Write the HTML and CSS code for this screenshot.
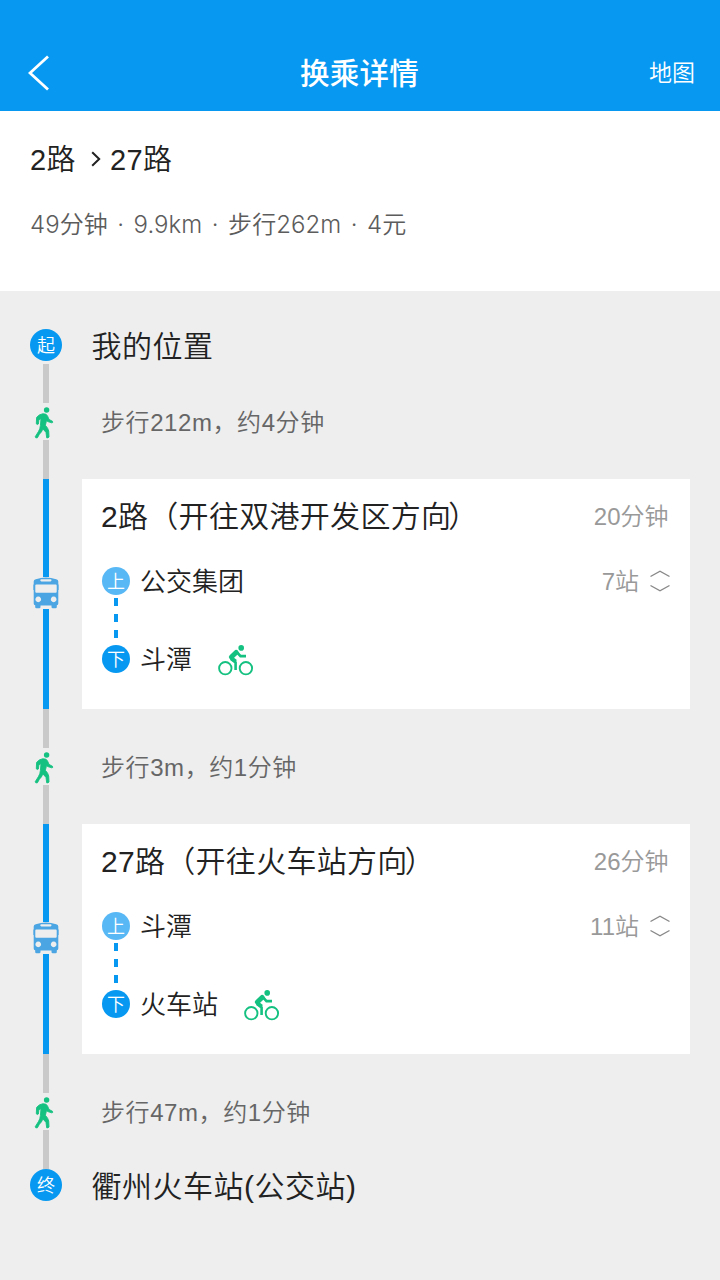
FILE: index.html
```html
<!DOCTYPE html>
<html lang="zh-CN">
<head>
<meta charset="utf-8">
<title>换乘详情</title>
<link rel="stylesheet" href="styles.css">
</head>
<body>
<svg class="symbols" aria-hidden="true">
  <symbol id="walk" viewBox="0 0 20 32">
    <circle cx="12.6" cy="3" r="2.7"/>
    <path stroke="currentColor" stroke-width=".9" stroke-linejoin="round" d="M8.6 6.8Q12.6 6.4 13.5 8.9L15 12.4L18.5 14.3Q19.2 16 17.7 15.8L13.5 14.5L12.6 13.2L11.4 18.3Q14.2 21.3 14.7 24L15 30Q14.2 31.2 12.7 30.8L12 25.4L8.9 21.9Q7.7 25.2 5.4 27.2L3.4 30.8Q1.4 31.4 1.2 29.8L4.3 24.8Q6.2 22 6.4 18.5L7 11.7L4.9 12.7L4.4 17Q3 18.1 2.3 16.7L2.6 10.4Q5 7.3 8.6 6.8Z"/>
  </symbol>
  <symbol id="bus" viewBox="0 0 26 32">
    <path fill-rule="evenodd" d="M.7 4.5Q.7 2.6 2.8 2.2Q13-1 23.2 2.2Q25.3 2.6 25.3 4.5V7.5H25.7V13H25.3V26.5Q25.3 28 23.8 28.3V30Q23.8 31.3 22.5 31.3H19.8Q18.5 31.3 18.5 30V28.5H7.5V30Q7.5 31.3 6.2 31.3H3.5Q2.2 31.3 2.2 30V28.3Q.7 28 .7 26.5V13H.3V7.5H.7ZM8.3 2.3Q7.3 2.3 7.3 3.3T8.3 4.4H17.5Q18.5 4.4 18.5 3.3T17.5 2.3ZM3.3 7.5Q2.3 7.5 2.3 8.5V14.7Q2.3 15.7 3.3 15.7H22.7Q23.7 15.7 23.7 14.7V8.5Q23.7 7.5 22.7 7.5ZM5.2 19.6A2.8 2.8 0 1 0 5.3 19.6ZM20.6 19.6A2.8 2.8 0 1 0 20.7 19.6Z"/>
  </symbol>
  <symbol id="bike" viewBox="0 0 36 32">
    <g fill="none" stroke="currentColor">
      <circle cx="7.3" cy="23.2" r="6.2" stroke-width="1.9"/>
      <circle cx="27.9" cy="23.2" r="6.2" stroke-width="1.9"/>
      <path d="M18.3 6.5L22.5 11.1H28M12.8 14L17.6 17.5V25" stroke-width="2.6"/>
      <path d="M18.1 7.5L13.4 12" stroke-width="5" stroke-linecap="round"/>
      <path d="M13.3 13L17.8 16.5" stroke-width="3.6"/>
    </g>
    <circle cx="23.2" cy="2.9" r="2.8"/>
  </symbol>
  <symbol id="expand" viewBox="0 0 20 22">
    <path d="M.5 6.5L10 1.2L19.5 6.5M.5 15.5L10 20.8L19.5 15.5" fill="none" stroke="currentColor" stroke-width="1.4"/>
  </symbol>
</svg>

<header class="header">
  <svg class="back" viewBox="0 0 22 36"><path d="M20 1.5L2 18L20 34.5" fill="none" stroke="#fff" stroke-width="2.8"/></svg>
  <h1 class="title">换乘详情</h1>
  <span class="map-link">地图</span>
</header>

<section class="summary">
  <div class="routes"><span>2路</span><svg class="chevron" viewBox="0 0 10 16"><path d="M1.2 1.2L8.2 8L1.2 14.8" fill="none" stroke="currentColor" stroke-width="2"/></svg><span>27路</span></div>
  <div class="facts">49分钟 · 9.9km · 步行262m · 4元</div>
</section>

<main class="timeline">
  <div class="row place start"><div class="rail"><span class="node">起</span></div><div class="place-name">我的位置</div></div>

  <div class="row walk"><div class="rail"><i class="line"></i><svg class="walk-icon"><use href="#walk"/></svg><i class="line"></i></div><div class="walk-text">步行212m，约4分钟</div></div>

  <div class="row ride">
    <div class="rail"><i class="line"></i><svg class="bus-icon"><use href="#bus"/></svg><i class="line"></i></div>
    <article class="card">
      <div class="card-head"><h2 class="route-name">2路（开往双港开发区方向<span class="paren">）</span></h2><span class="meta">20分钟</span></div>
      <div class="stop"><span class="badge on">上</span><span class="stop-name">公交集团</span><span class="meta count">7站</span><svg class="expand"><use href="#expand"/></svg></div>
      <div class="dashes"><i></i><i></i><i></i></div>
      <div class="stop"><span class="badge off">下</span><span class="stop-name">斗潭</span><svg class="bike"><use href="#bike"/></svg></div>
    </article>
  </div>

  <div class="row walk"><div class="rail"><i class="line"></i><svg class="walk-icon"><use href="#walk"/></svg><i class="line"></i></div><div class="walk-text">步行3m，约1分钟</div></div>

  <div class="row ride">
    <div class="rail"><i class="line"></i><svg class="bus-icon"><use href="#bus"/></svg><i class="line"></i></div>
    <article class="card">
      <div class="card-head"><h2 class="route-name">27路（开往火车站方向<span class="paren">）</span></h2><span class="meta">26分钟</span></div>
      <div class="stop"><span class="badge on">上</span><span class="stop-name">斗潭</span><span class="meta count">11站</span><svg class="expand"><use href="#expand"/></svg></div>
      <div class="dashes"><i></i><i></i><i></i></div>
      <div class="stop"><span class="badge off">下</span><span class="stop-name">火车站</span><svg class="bike"><use href="#bike"/></svg></div>
    </article>
  </div>

  <div class="row walk"><div class="rail"><i class="line"></i><svg class="walk-icon"><use href="#walk"/></svg><i class="line"></i></div><div class="walk-text">步行47m，约1分钟</div></div>

  <div class="row place end"><div class="rail"><span class="node">终</span></div><div class="place-name">衢州火车站(公交站)</div></div>
</main>
</body>
</html>
```

FILE: styles.css
```css
* { box-sizing: border-box; }
body {
  margin: 0;
  min-height: 1280px;
  background: #eee;
  color: #222;
  font-family: "Liberation Sans", "Noto Sans CJK SC", sans-serif;
  font-weight: 350;
}
h1, h2 { margin: 0; font-weight: 350; }
svg { display: block; flex: none; fill: currentColor; }
.symbols { position: absolute; width: 0; height: 0; }

.header {
  height: 111px;
  padding: 34px 25px 0 28px;
  display: grid;
  grid-template-columns: 1fr auto 1fr;
  align-items: center;
  background: #0799f1;
  color: #fff;
}
.back { width: 22px; height: 36px; }
.title { padding: 2px 4px 0 0; font-size: 29.5px; font-weight: 500; line-height: 40px; letter-spacing: .3px; }
.map-link { justify-self: end; font-size: 23px; line-height: 32px; }

.summary { height: 180px; padding: 27px 30px 0; background: #fff; }
.routes { display: flex; align-items: center; font-size: 29px; line-height: 44px; }
.routes span { letter-spacing: .4px; }
.chevron { width: 10px; height: 16px; margin: 0 9px 3px 15px; }
.facts {
  margin-top: 23px;
  font-family: Inter, "Noto Sans CJK SC", sans-serif;
  font-size: 24px;
  line-height: 40px;
  color: #5c5c5c;
  white-space: nowrap;
  word-spacing: 2.7px;
  letter-spacing: .05px;
}

.row { display: flex; }
.rail { width: 32px; margin-left: 30px; flex: none; display: flex; flex-direction: column; align-items: center; }
.node {
  width: 32px; height: 32px; border-radius: 50%; padding-top: 2px;
  display: flex; align-items: center; justify-content: center;
  background: #0799f1; color: #fff; font-size: 18px; line-height: 30px;
}
.place-name { margin-left: 29.5px; font-size: 30px; line-height: 36px; letter-spacing: .5px; }
.start { height: 73px; padding-top: 38px; }
.line { width: 6px; flex: 1; background: #c9c9c9; }

.walk { height: 115px; align-items: center; }
.walk .rail { height: 115px; }
.walk-icon { width: 20px; height: 32px; margin: 4px 4px 1px 0; color: #15c180; }
.walk-text { margin-left: 39px; padding-top: 2px; font-size: 24px; line-height: 36px; letter-spacing: .58px; color: #666; }

.ride { height: 230px; }
.ride .line { background: #0799f1; }
.ride .line:first-child { flex: none; height: 98px; }
.bus-icon { width: 26px; height: 32px; color: #4aa5e2; }
.card { width: 608px; margin-left: 20px; padding: 16px 20px 0; background: #fff; }
.card-head { display: flex; justify-content: space-between; align-items: center; height: 44px; }
.route-name { margin-left: -1px; font-size: 30px; line-height: 44px; letter-spacing: .3px; }
.paren { margin-left: -3px; }
.card-head .meta { margin-right: 1.5px; }
.meta { font-size: 24px; line-height: 36px; color: #999; }
.stop { display: flex; align-items: center; height: 28px; }
.stop-name, .count { padding-top: 2px; }
.card-head + .stop { margin-top: 28px; }
.badge {
  width: 28px; height: 28px; border-radius: 50%; padding-top: 2px;
  display: flex; align-items: center; justify-content: center;
  color: #fff; font-size: 18px; line-height: 26px;
}
.on { background: #58b8f5; }
.off { background: #0799f1; }
.stop-name { margin-left: 10px; font-size: 26px; line-height: 36px; }
.count { margin-left: auto; }
.expand { width: 20px; height: 22px; margin: 0 0 0 11px; color: #888; }
.dashes { width: 28px; height: 50px; padding: 3px 0 7px; display: flex; flex-direction: column; align-items: center; justify-content: space-between; }
.dashes i { width: 4px; height: 8px; background: #0799f1; }
.bike { width: 36px; height: 32px; margin: 4px 0 0 26px; color: #15c180; }
```
